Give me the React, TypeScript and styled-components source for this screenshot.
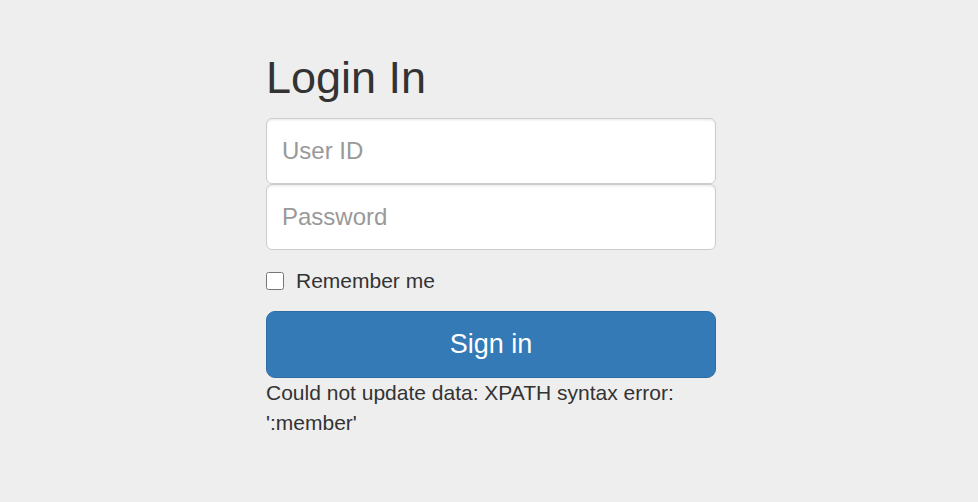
import React from "react";
import styled, { createGlobalStyle } from "styled-components";

const GlobalStyle = createGlobalStyle`
  html, body {
    margin: 0;
    padding: 0;
    background: #eeeeee;
  }
  body {
    font-family: "Liberation Sans", Arial, Helvetica, sans-serif;
    font-size: 21px;
    line-height: 30px;
    color: #333333;
  }
  * { box-sizing: border-box; }
`;

const Page = styled.div`
  display: flex;
  justify-content: center;
  padding: 53px 0 60px 4px;
`;

const Form = styled.form`
  width: 450px;
  display: flex;
  flex-direction: column;
`;

const Heading = styled.h2`
  margin: 0 0 15px 0;
  font-size: 45px;
  line-height: 49.5px;
  font-weight: 500;
  color: #333333;
`;

const Input = styled.input`
  display: block;
  width: 100%;
  height: 66px;
  padding: 15px;
  margin: 0;
  font-family: inherit;
  font-size: 24px;
  line-height: 34px;
  color: #555555;
  background: #ffffff;
  border: 1px solid #cccccc;
  border-radius: 6px;
  box-shadow: inset 0 1.5px 1.5px rgba(0, 0, 0, 0.075);
  outline: none;

  &::placeholder {
    color: #999999;
  }
`;

const CheckRow = styled.label`
  display: flex;
  align-items: center;
  gap: 12px;
  margin: 16px 0 15px 0;
  height: 30px;
  font-size: 21px;
  cursor: pointer;
`;

const Check = styled.input`
  width: 18px;
  height: 18px;
  margin: 1px 0 0 0;
  flex: none;
`;

const SignIn = styled.button`
  display: block;
  width: 100%;
  height: 67px;
  padding: 0 24px;
  font-family: inherit;
  font-size: 27px;
  line-height: 36px;
  color: #ffffff;
  background: #337ab7;
  border: 1px solid #2e6da4;
  border-radius: 9px;
  cursor: pointer;
`;

const ErrorText = styled.div`
  font-size: 21px;
  line-height: 30px;
  color: #333333;
`;

export default function App() {
  return (
    <>
      <GlobalStyle />
      <Page>
        <Form onSubmit={(e) => e.preventDefault()}>
          <Heading>Login In</Heading>
          <Input type="text" placeholder="User ID" />
          <Input type="password" placeholder="Password" />
          <CheckRow>
            <Check type="checkbox" />
            Remember me
          </CheckRow>
          <SignIn type="submit">Sign in</SignIn>
          <ErrorText>
            Could not update data: XPATH syntax error: ':member'
          </ErrorText>
        </Form>
      </Page>
    </>
  );
}
